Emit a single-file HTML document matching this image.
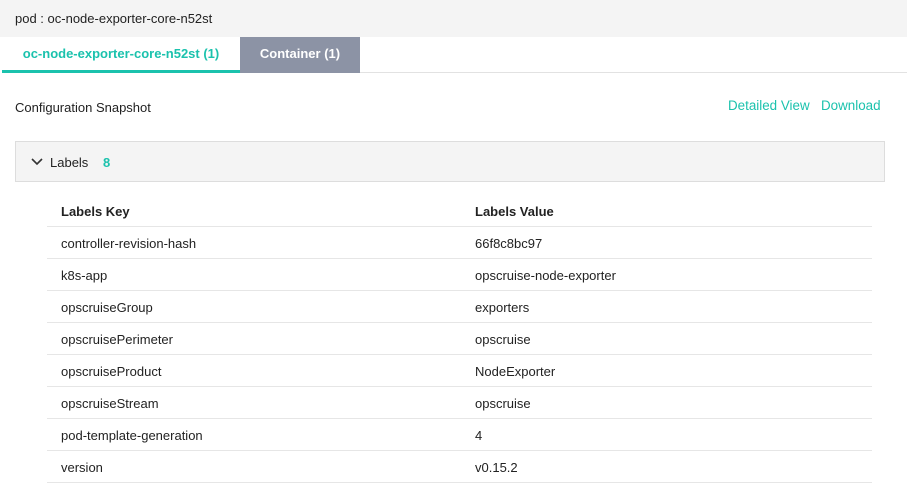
<!DOCTYPE html>
<html><head><meta charset="utf-8"><style>
*{margin:0;padding:0;box-sizing:border-box}
body{width:907px;height:488px;background:#fff;font-family:"Liberation Sans",sans-serif;font-size:13px;color:#222;position:relative;overflow:hidden}
.abs{position:absolute}
.top{left:0;top:0;width:907px;height:37px;background:#f4f4f4}
.row{position:absolute;left:47px;width:825px;height:32px;border-bottom:1px solid #e6e6e6;line-height:33px}
.row span{position:absolute}
.row .a{left:14px}.row .b{left:428px}
</style></head><body>
<div class="abs top"><div class="abs" style="left:15px;top:11px;font-size:13px;color:#222">pod : oc-node-exporter-core-n52st</div></div>
<div class="abs" style="left:2px;top:37px;width:238px;height:36px;border-bottom:3px solid #1bc2ad;color:#1bc2ad;font-weight:bold;text-align:center;line-height:34px">oc-node-exporter-core-n52st (1)</div>
<div class="abs" style="left:240px;top:37px;width:120px;height:36px;background:#8c93a5;color:#fff;font-weight:bold;text-align:center;line-height:34px">Container (1)</div>
<div class="abs" style="left:360px;top:72px;width:547px;height:1px;background:#e2e2e2"></div>
<div class="abs" style="left:15px;top:100px">Configuration Snapshot</div>
<div class="abs" style="left:728px;top:98px;color:#1bc2ad;font-size:13.4px">Detailed View</div>
<div class="abs" style="left:821px;top:98px;color:#1bc2ad;font-size:13.4px">Download</div>
<div class="abs" style="left:15px;top:141px;width:870px;height:41px;background:#f4f4f4;border:1px solid #ddd">
<svg class="abs" style="left:15px;top:16px" width="12" height="8" viewBox="0 0 12 8"><path d="M1 1L6 6L11 1" fill="none" stroke="#333" stroke-width="1.6"/></svg>
<span class="abs" style="left:34px;top:13px">Labels</span>
<span class="abs" style="left:87px;top:13px;color:#1bc2ad;font-weight:bold">8</span>
</div>
<div class="row" style="top:195px;font-weight:bold"><span class="a">Labels Key</span><span class="b">Labels Value</span></div>
<div class="row" style="top:227px"><span class="a">controller-revision-hash</span><span class="b">66f8c8bc97</span></div>
<div class="row" style="top:259px"><span class="a">k8s-app</span><span class="b">opscruise-node-exporter</span></div>
<div class="row" style="top:291px"><span class="a">opscruiseGroup</span><span class="b">exporters</span></div>
<div class="row" style="top:323px"><span class="a">opscruisePerimeter</span><span class="b">opscruise</span></div>
<div class="row" style="top:355px"><span class="a">opscruiseProduct</span><span class="b">NodeExporter</span></div>
<div class="row" style="top:387px"><span class="a">opscruiseStream</span><span class="b">opscruise</span></div>
<div class="row" style="top:419px"><span class="a">pod-template-generation</span><span class="b">4</span></div>
<div class="row" style="top:451px"><span class="a">version</span><span class="b">v0.15.2</span></div>
</body></html>
